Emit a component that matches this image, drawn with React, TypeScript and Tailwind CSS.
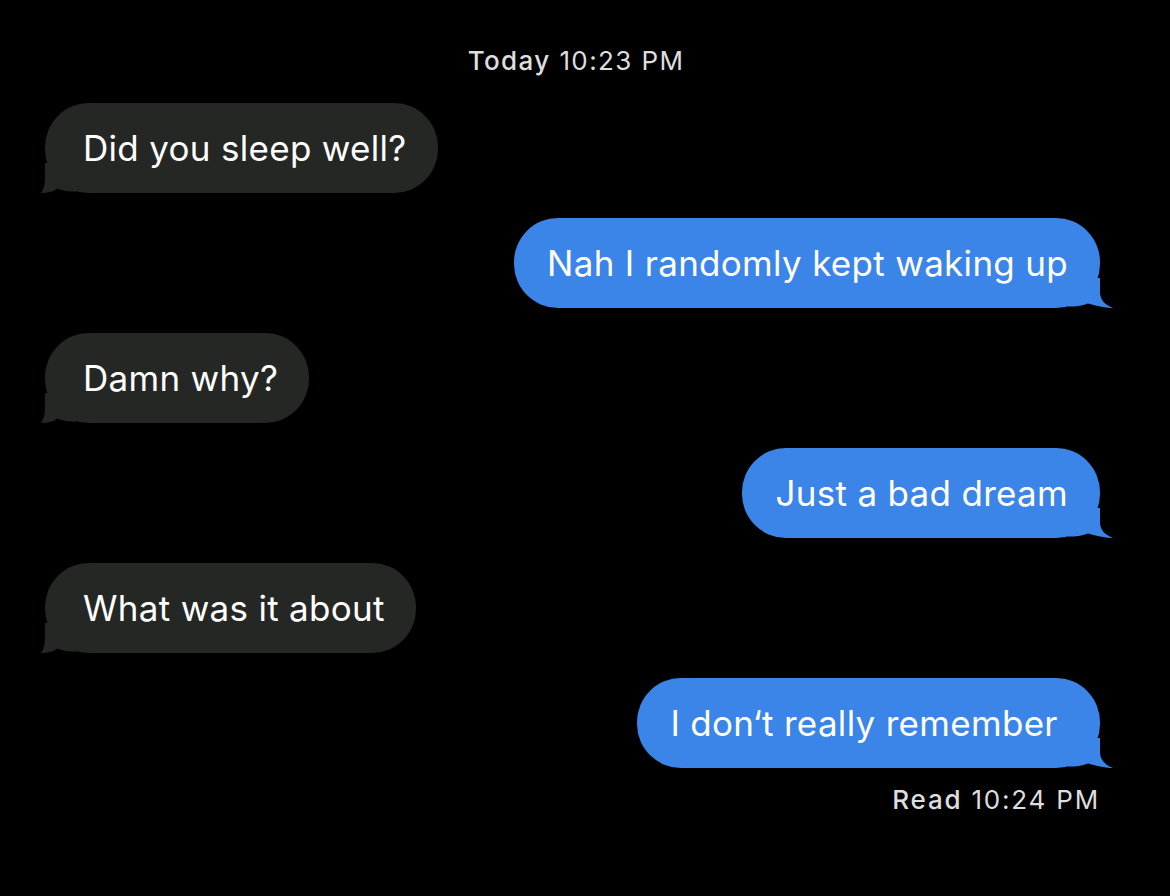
import React from 'react';

type Message = {
  text: string;
  fromMe: boolean;
};

const messages: Message[] = [
  { text: 'Did you sleep well?', fromMe: false },
  { text: 'Nah I randomly kept waking up', fromMe: true },
  { text: 'Damn why?', fromMe: false },
  { text: 'Just a bad dream', fromMe: true },
  { text: 'What was it about', fromMe: false },
  { text: 'I don‘t really remember\u00a0', fromMe: true },
];

// curled tail at the bottom corner; s = how far the tip sticks out past the bubble edge
const tailPath = (s: number) =>
  `M${s} 0 V14 C${s} 22 ${s * 0.6} 27 0 30 C6 30 12 29 ${s + 12} 25.5 C${s + 18} 28 ${s + 24} 28.6 ${s + 32} 28.6 V0 Z`;

const Tail: React.FC<{ fromMe: boolean }> = ({ fromMe }) =>
  fromMe ? (
    <svg viewBox="0 0 45 30" className="absolute bottom-0 right-[-13px] w-[45px] h-[30px] -scale-x-100">
      <path d={tailPath(13)} fill="#3a85e7" />
    </svg>
  ) : (
    <svg viewBox="0 0 36 30" className="absolute bottom-0 left-[-4px] w-[36px] h-[30px]">
      <path d={tailPath(4)} fill="#252725" />
    </svg>
  );

const Bubble: React.FC<{ msg: Message }> = ({ msg }) => (
  <div className={msg.fromMe ? 'flex justify-end' : 'flex justify-start'}>
    <div
      className={
        msg.fromMe
          ? 'relative h-[90px] flex items-center rounded-[44px] bg-[#3a85e7] pl-[33px] pr-[32px]'
          : 'relative h-[90px] flex items-center rounded-[44px] bg-[#252725] pl-[38px] pr-[31px]'
      }
    >
      <Tail fromMe={msg.fromMe} />
      <span className="relative text-[35px] leading-none text-white tracking-[0.3px]">{msg.text}</span>
    </div>
  </div>
);

export default function App() {
  return (
    <div
      className="w-[1170px] h-[896px] bg-black text-white overflow-hidden"
      style={{ fontFamily: 'Inter, "Liberation Sans", sans-serif' }}
    >
      <div className="pt-[46px] pr-[18px] text-center text-[26px] leading-[30px] tracking-[1.4px] text-[#dedede]">
        <span className="font-medium">Today</span> 10:23 PM
      </div>

      <div className="mt-[27px] pl-[45px] pr-[70px] flex flex-col gap-[25px]">
        {messages.map((m, i) => (
          <Bubble key={i} msg={m} />
        ))}
      </div>

      <div className="mt-[17px] pr-[70px] text-right text-[26px] leading-[30px] tracking-[1.8px] text-[#dedede]">
        <span className="font-medium">Read</span> 10:24 PM
      </div>
    </div>
  );
}
